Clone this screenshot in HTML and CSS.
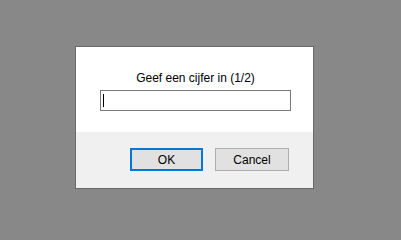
FILE: index.html
```html
<!DOCTYPE html>
<html>
<head>
<meta charset="utf-8">
<link rel="stylesheet" href="styles.css">
</head>
<body>
<div class="dialog">
  <div class="body">
    <div class="prompt">Geef een cijfer in (1/2)</div>
    <div class="field"><span class="caret"></span></div>
  </div>
  <div class="footer">
    <button class="btn ok">OK</button>
    <button class="btn cancel">Cancel</button>
  </div>
</div>
</body>
</html>
```
FILE: styles.css
```css
html, body {
  margin: 0;
  height: 100%;
}
body {
  background: #888888;
  padding: 46px 0 0 75px;
  box-sizing: border-box;
  font-family: "Liberation Sans", Arial, sans-serif;
  font-size: 12px;
  color: #000;
}
.dialog {
  width: 239px;
  border: 1px solid #6a6a6a;
  box-sizing: border-box;
  background: #fff;
}
.body {
  padding: 24px 0 21px 24px;
  height: 85px;
  box-sizing: border-box;
}
.prompt {
  line-height: 14px;
  text-align: center;
  padding-right: 22px;
  margin-bottom: 5px;
}
.field {
  width: 191px;
  height: 21px;
  border: 1px solid #7a7a7a;
  box-sizing: border-box;
  padding: 3px 0 0 2px;
  display: flex;
}
.caret {
  width: 1px;
  height: 13px;
  background: #000;
}
.footer {
  background: #f0f0f0;
  height: 56px;
  box-sizing: border-box;
  padding: 16px 24px 0 0;
  display: flex;
  justify-content: flex-end;
  align-items: flex-start;
  gap: 12px;
}
.btn {
  font-family: "Liberation Sans", Arial, sans-serif;
  font-size: 12px;
  height: 23px;
  margin: 0;
  padding: 0;
  background: #e1e1e1;
  color: #000;
  box-sizing: border-box;
}
.ok {
  width: 73px;
  border: 2px solid #0078d7;
}
.cancel {
  width: 74px;
  border: 1px solid #adadad;
}
```
